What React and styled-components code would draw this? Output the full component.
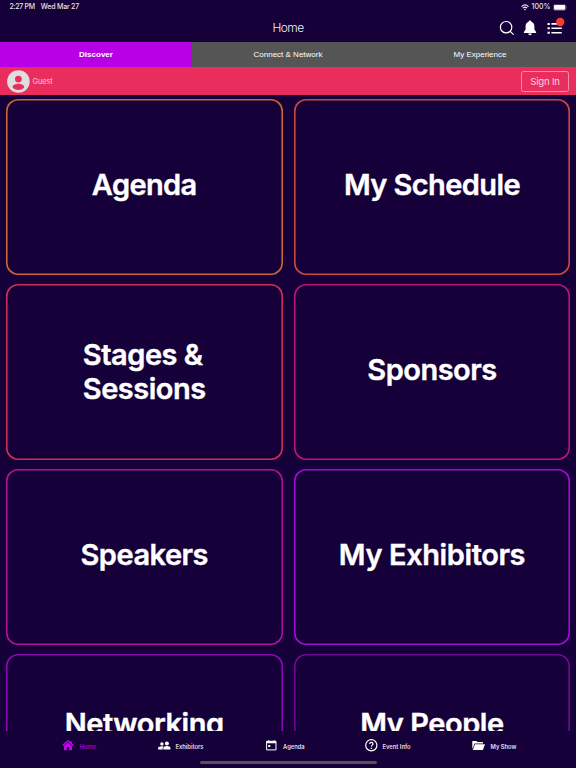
import React from "react";
import styled, { createGlobalStyle } from "styled-components";

const GlobalStyle = createGlobalStyle`
  * { box-sizing: border-box; }
  body { margin: 0; background: #150039; }
`;

const Screen = styled.div`
  width: 576px;
  height: 768px;
  display: flex;
  flex-direction: column;
  overflow: hidden;
  background: #150039;
  color: #fff;
  font-family: Inter, "Liberation Sans", sans-serif;
  white-space: nowrap;
`;

const StatusBar = styled.div`
  height: 14px;
  flex: none;
  display: flex;
  align-items: center;
  padding: 0 8px 0 9.5px;
  font-size: 7px;
  font-weight: 500;
  line-height: 14px;
  color: #e6e2ec;
`;

const StatusText = styled.span`
  letter-spacing: ${(p) => p.$spacing || "0"};
  margin-right: ${(p) => p.$gap || "0"};
`;

const StatusRight = styled.div`
  margin-left: auto;
  display: flex;
  align-items: center;
  gap: 2.5px;
  svg { display: block; }
`;

const Header = styled.header`
  height: 28px;
  flex: none;
  display: grid;
  grid-template-columns: 1fr auto 1fr;
  align-items: center;
`;

const Title = styled.h1`
  grid-column: 2;
  margin: 0;
  font-size: 12px;
  font-weight: 300;
  line-height: 26px;
  padding-bottom: 1px;
  letter-spacing: -0.6px;
  color: #f1eff5;
`;

const HeaderActions = styled.div`
  display: flex;
  justify-content: flex-end;
  align-items: center;
  padding-right: 8px;
  svg { display: block; }
`;

const Tabs = styled.nav`
  height: 25px;
  flex: none;
  display: grid;
  grid-template-columns: repeat(3, 1fr);
`;

const Tab = styled.div`
  background: ${(p) => (p.$active ? "#b800e6" : "#555556")};
  font-family: "Liberation Sans", Arial, sans-serif;
  font-size: 8px;
  font-weight: ${(p) => (p.$active ? 700 : 400)};
  line-height: 26px;
  text-align: center;
`;

const AccountBar = styled.div`
  height: 28px;
  flex: none;
  display: flex;
  align-items: center;
  background: #e92e5d;
  padding: 0 7px;
  svg { display: block; }
`;

const Guest = styled.span`
  margin-left: 2.5px;
  font-size: 7.4px;
  letter-spacing: -0.1px;
  color: #fbc6d3;
`;

const SignIn = styled.button`
  margin: 0 0 0 auto;
  width: 48px;
  height: 21px;
  padding: 0;
  border: 1px solid #f391aa;
  border-radius: 2.5px;
  background: transparent;
  color: #fbd4de;
  font-family: inherit;
  font-size: 9.6px;
  line-height: 19px;
  letter-spacing: -0.2px;
`;

const Content = styled.main`
  height: 636px;
  flex: none;
  overflow: hidden;
  padding: 4px 6px 0;
  display: grid;
  grid-template-columns: 276.5px 276px;
  grid-auto-rows: 176px;
  column-gap: 11.5px;
  row-gap: 9px;
`;

const Card = styled.section`
  box-shadow: inset 0 0 0 1.6px ${(p) => p.$color};
  border-radius: 12px;
  display: flex;
  align-items: center;
  justify-content: center;
  padding-bottom: ${(p) => p.$lift ?? 4}px;
`;

const CardLabel = styled.span`
  font-size: 29px;
  font-weight: 600;
  line-height: 34.5px;
  letter-spacing: ${(p) => p.$spacing}px;
  -webkit-text-stroke: 0.4px #fff;
  white-space: pre;
`;

const BottomBar = styled.footer`
  flex: 1;
  display: flex;
  flex-direction: column;
  align-items: center;
`;

const NavItems = styled.div`
  align-self: stretch;
  height: 29px;
  display: grid;
  grid-template-columns: 96px 107.5px 99px 107.5px auto;
  padding-left: 62px;
`;

const NavItem = styled.div`
  display: flex;
  align-items: center;
  color: ${(p) => (p.$active ? "#c400f0" : "#fff")};
  svg { display: block; }
`;

const NavIcon = styled.span`
  width: ${(p) => p.$width}px;
  display: flex;
`;

const NavLabel = styled.span`
  font-size: 5.8px;
  font-weight: 600;
  line-height: 8px;
  padding-top: 2px;
  color: ${(p) => (p.$active ? "#a100d2" : "#e4deeb")};
`;

const HomeIndicator = styled.div`
  width: 177px;
  height: 3px;
  margin-top: 0.5px;
  border-radius: 2px;
  background: #555355;
`;

const WifiIcon = () => (
  <svg width="8" height="7" viewBox="0 0 8 7" fill="none" stroke="#eee" strokeWidth="1.1">
    <path d="M.5 2.6Q4-.7 7.5 2.6M1.8 4.1Q4 2.1 6.2 4.1" />
    <path d="M2.9 5.2Q4 4.3 5.1 5.2L4 6.5Z" fill="#eee" stroke="none" />
  </svg>
);

const BatteryIcon = () => (
  <svg width="15" height="7" viewBox="0 0 15 7">
    <rect x=".3" y=".4" width="12.6" height="6.1" rx="1.8" fill="none" stroke="#8d819c" strokeWidth=".5" />
    <rect x="1" y="1.1" width="11.2" height="4.7" rx="1.1" fill="#fff" />
    <path d="M13.5 2.5q1 1 0 2z" fill="#8d819c" />
  </svg>
);

const ActionIcons = () => (
  <svg width="70" height="24" viewBox="0 0 70 24">
    <g fill="none" stroke="#fff" strokeWidth="1.2" strokeLinecap="round">
      <circle cx="8.1" cy="11.2" r="5.7" />
      <path d="M12.2 15.3 15.3 18.4" />
    </g>
    <path
      fill="#fff"
      d="M32 4.6c.8 0 1.3.5 1.3 1.2 2.2.7 3.1 2.4 3.1 4.7v3l1.7 2.4v1H25.9v-1l1.7-2.4v-3c0-2.3.9-4 3.1-4.7 0-.7.5-1.2 1.3-1.2zM30.2 17.5h3.6a1.8 1.8 0 0 1-3.6 0z"
    />
    <g stroke="#fff">
      <path d="M49.5 7.9h2.3M49.5 12.3h2.3M49.5 16.7h2.3" strokeWidth="2" />
      <path d="M53.4 7.9h10.4M53.4 12.3h10.4M53.4 16.7h10.4" strokeWidth="1.6" />
    </g>
    <circle cx="62.2" cy="6" r="4.2" fill="#ff3b30" />
  </svg>
);

const AvatarIcon = () => (
  <svg width="23" height="23" viewBox="0 0 23 23">
    <circle cx="11.4" cy="11.5" r="11.3" fill="#dedede" />
    <circle cx="11.4" cy="9.1" r="3.4" fill="#e92e5d" />
    <path d="M5.6 17.2c0-2.2 2.8-3.4 5.8-3.4s5.8 1.2 5.8 3.4c-1.2 1.8-3.3 2.8-5.8 2.8s-4.6-1-5.8-2.8z" fill="#e92e5d" />
  </svg>
);

const HomeIcon = () => (
  <svg width="12" height="11" viewBox="0 0 12 11">
    <path d="M.7 5.4 6 1l5.3 4.4M9.1 1.2v2" fill="none" stroke="currentColor" strokeWidth="1.4" />
    <path d="M2 5.7 6 2.6l4 3.1v4.6H7.2V7.1H4.8v3.2H2z" fill="currentColor" />
  </svg>
);

const PeopleIcon = () => (
  <svg width="13" height="11" viewBox="0 0 13 11" fill="currentColor">
    <circle cx="3.9" cy="3.9" r="1.7" />
    <circle cx="8.9" cy="3.5" r="2" />
    <path d="M.1 9.4V8.1C.1 6.9 2 6.2 4 6.2c.8 0 1.2.1 1.6.3-.6.5-.9 1-.9 1.7v1.2zM5.3 9.4V8.2c0-1.3 1.8-2.1 3.6-2.1s3.6.8 3.6 2.1v1.2z" />
  </svg>
);

const CalendarIcon = () => (
  <svg width="11" height="11" viewBox="0 0 11 11">
    <path d="M.6 1.3h9.4v8.6H.6z" fill="none" stroke="currentColor" strokeWidth="1" />
    <path d="M.6 1.3h9.4v2H.6zM2 .3h1.2v2H2zM7.5.3h1.2v2H7.5zM2.2 4.9h2.1v2H2.2z" fill="currentColor" />
  </svg>
);

const HelpIcon = () => (
  <svg width="13" height="13" viewBox="0 0 13 13" fill="none" stroke="currentColor">
    <circle cx="6.3" cy="6.3" r="5.6" strokeWidth="1.2" />
    <path d="M4.7 5C4.7 2.8 8 3 8 5c0 1.1-1.6 1.2-1.6 2.6" strokeWidth="1.2" />
    <circle cx="6.4" cy="9.3" r=".8" fill="currentColor" stroke="none" />
  </svg>
);

const FolderIcon = () => (
  <svg width="14" height="11" viewBox="0 0 14 11" fill="currentColor">
    <path d="M.3 1h4.1l.9 1.1h5.6v1.5H2.6L.6 8.5H.3z" />
    <path d="M3 4.2h10L10.9 9.9H.8z" />
  </svg>
);

const cards = [
  { label: "Agenda", color: "#c86532", spacing: -0.6 },
  { label: "My Schedule", color: "#ca4842", spacing: -0.6 },
  { label: "Stages &\nSessions", color: "#cd2e59", spacing: -0.5, lift: 0 },
  { label: "Sponsors", color: "#bd1278", spacing: -0.5 },
  { label: "Speakers", color: "#b01295", spacing: -0.5 },
  { label: "My Exhibitors", color: "#a20bd1", spacing: -0.4 },
  { label: "Networking", color: "#8908b2", spacing: -0.45, lift: 35 },
  { label: "My People", color: "#700991", spacing: -0.45, lift: 35 },
];

const navItems = [
  { label: "Home", Icon: HomeIcon, width: 17.5, active: true },
  { label: "Exhibitors", Icon: PeopleIcon, width: 17.5 },
  { label: "Agenda", Icon: CalendarIcon, width: 17.5 },
  { label: "Event Info", Icon: HelpIcon, width: 18 },
  { label: "My Show", Icon: FolderIcon, width: 18.5 },
];

export default function App() {
  return (
    <Screen>
      <GlobalStyle />
      <StatusBar>
        <StatusText $gap="5.9px" $spacing="-0.3px">2:27 PM</StatusText>
        <StatusText $spacing="-0.2px">Wed Mar 27</StatusText>
        <StatusRight>
          <WifiIcon />
          <StatusText>100%</StatusText>
          <BatteryIcon />
        </StatusRight>
      </StatusBar>
      <Header>
        <Title>Home</Title>
        <HeaderActions>
          <ActionIcons />
        </HeaderActions>
      </Header>
      <Tabs>
        <Tab $active>Discover</Tab>
        <Tab>Connect &amp; Network</Tab>
        <Tab>My Experience</Tab>
      </Tabs>
      <AccountBar>
        <AvatarIcon />
        <Guest>Guest</Guest>
        <SignIn>Sign In</SignIn>
      </AccountBar>
      <Content>
        {cards.map((c) => (
          <Card key={c.label} $color={c.color} $lift={c.lift}>
            <CardLabel $spacing={c.spacing}>{c.label}</CardLabel>
          </Card>
        ))}
      </Content>
      <BottomBar>
        <NavItems>
          {navItems.map(({ label, Icon, width, active }) => (
            <NavItem key={label} $active={active}>
              <NavIcon $width={width}>
                <Icon />
              </NavIcon>
              <NavLabel $active={active}>{label}</NavLabel>
            </NavItem>
          ))}
        </NavItems>
        <HomeIndicator />
      </BottomBar>
    </Screen>
  );
}
